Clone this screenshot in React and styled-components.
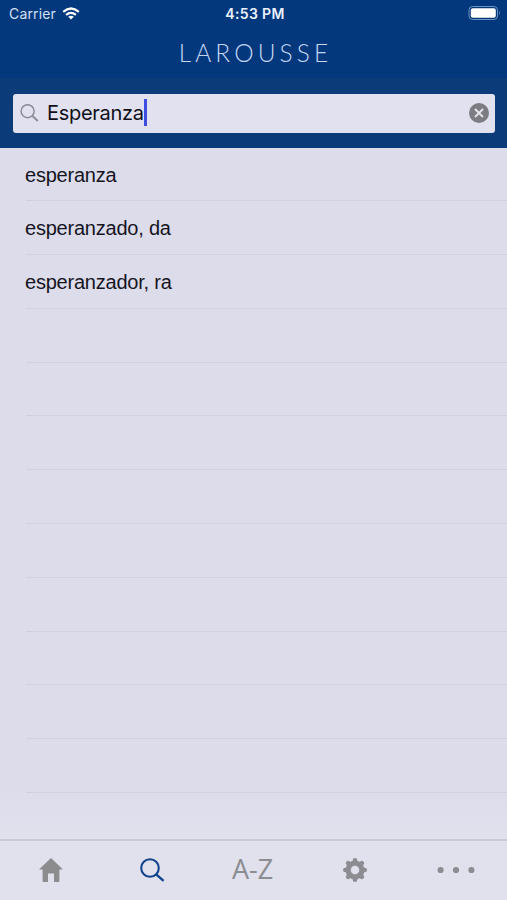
import React, { useState } from 'react'
import styled, { createGlobalStyle } from 'styled-components'

const colors = {
  navy: '#04387d',
  searchBar: '#0b3b79',
  field: '#e1e1ef',
  list: '#dddceb',
  line: '#d0d0df',
  tabBar: '#e1e1ee',
  gray: '#8c8c93',
  active: '#12438c',
}

const GlobalStyle = createGlobalStyle`
  * {
    box-sizing: border-box;
  }

  body {
    margin: 0;
    font-family: "Liberation Sans", Arial, sans-serif;
    overflow: hidden;
  }
`

const Screen = styled.div`
  display: flex;
  flex-direction: column;
  height: 900px;
  background: ${colors.list};
`

const StatusBar = styled.header`
  display: grid;
  grid-template-columns: 1fr auto 1fr;
  align-items: center;
  height: 28px;
  padding: 0 6px 2px 9px;
  background: ${colors.navy};
  color: #fff;
  font-family: Inter, sans-serif;
`

const Carrier = styled.div`
  display: flex;
  align-items: center;
  gap: 6px;
  font-size: 14px;
  letter-spacing: 0.15px;
  color: #d3e0f5;
`

const Clock = styled.div`
  font-size: 14px;
  font-weight: 600;
  letter-spacing: 0.35px;
  color: #eaf1fd;
`

const Battery = styled.svg`
  justify-self: end;
`

const Brand = styled.div`
  display: flex;
  justify-content: center;
  height: 50px;
  padding-left: 4px;
  background: ${colors.navy};
  color: #c3d6f4;
  font-family: Lato, sans-serif;
  font-size: 24.5px;
  font-weight: 300;
  line-height: 49px;
  letter-spacing: 4.1px;
`

const SearchBar = styled.div`
  height: 69.5px;
  padding: 16px 12px 0 13px;
  background: ${colors.searchBar};
`

const SearchField = styled.div`
  display: flex;
  align-items: center;
  height: 39px;
  padding: 0 6px 0 7px;
  border-radius: 3px;
  background: ${colors.field};
`

const Query = styled.span`
  margin: -2px 0 0 8px;
  font-family: Inter, sans-serif;
  font-size: 20px;
  letter-spacing: -0.3px;
  color: #10101a;
`

const Caret = styled.span`
  width: 3px;
  height: 27px;
  margin-top: -3px;
  background: #3d4ee0;
`

const ClearButton = styled.button`
  display: flex;
  margin: -1px 0 0 auto;
  padding: 0;
  border: 0;
  background: none;
`

const Results = styled.ul`
  flex: 1;
  min-height: 0;
  margin: 0;
  padding: 0 0 0 26px;
  list-style: none;
  overflow: hidden;
  background: linear-gradient(${colors.list} 0, ${colors.list} 640px, #e1e1ee 692px);
`

const Result = styled.li`
  height: 53.8px;
  border-bottom: 1px solid ${colors.line};
  font-size: 20px;
  line-height: 54.5px;
  letter-spacing: -0.22px;
  text-indent: -1px;
  color: #15151f;
`

const TabBar = styled.nav`
  display: grid;
  grid-template-columns: repeat(5, 1fr);
  height: 61px;
  border-top: 2px solid #cac9d7;
  background: ${colors.tabBar};
`

const Tab = styled.button`
  display: flex;
  align-items: center;
  justify-content: center;
  padding: 0 0 2px;
  border: 0;
  background: none;
  color: ${props => (props.$active ? colors.active : colors.gray)};
`

const TabText = styled.span`
  margin: -1px 2px 0 0;
  font-family: "Open Sans", sans-serif;
  font-size: 27px;
  line-height: 30px;
`

function WifiIcon() {
  return (
    <svg width="18" height="13" viewBox="0 0 18 13" fill="none" stroke="#fff" strokeWidth="2.2">
      <path d="M1.2 4.8Q9-1.8 16.8 4.8" />
      <path d="M4.1 7.9Q9 3.9 13.9 7.9" />
      <path d="M9 12.4L6.2 9.7Q9 7.6 11.8 9.7Z" fill="#fff" stroke="none" />
    </svg>
  )
}

function BatteryIcon() {
  return (
    <Battery width="33" height="14" viewBox="0 0 33 14">
      <rect x="1" y="0.5" width="28.5" height="13" rx="3.5" fill="none" stroke="#6e91c3" />
      <rect x="2.8" y="2.3" width="25" height="9.4" rx="2" fill="#fff" />
      <path d="M31 4.8q1.8 2.2 0 4.4z" fill="#6e91c3" />
    </Battery>
  )
}

function FieldIcon() {
  return (
    <svg width="19" height="19" viewBox="0 0 19 19" fill="none" stroke="#8d8d98" strokeWidth="1.5">
      <circle cx="7.6" cy="7.2" r="6.5" />
      <path d="M12.2 11.8L17.8 17.1" strokeWidth="2" />
    </svg>
  )
}

function ClearIcon() {
  return (
    <svg width="20" height="20" viewBox="0 0 20 20">
      <circle cx="10" cy="10" r="10" fill="#7c7c82" />
      <path d="M6 6L14 14M14 6L6 14" stroke="#e6e6f0" strokeWidth="1.8" />
    </svg>
  )
}

function HomeIcon() {
  return (
    <svg width="24" height="24" viewBox="0 0 24 24" fill="#8c8c8f">
      <path d="M12 0L24 11.6H20.4V23Q20.4 24 19.4 24H15V15.6H9V24H4.6Q3.6 24 3.6 23V11.6H0Z" />
    </svg>
  )
}

function SearchIcon() {
  return (
    <svg width="25" height="24" viewBox="0 0 25 24" fill="none" stroke="currentColor" strokeWidth="2.1">
      <circle cx="10" cy="10" r="8.8" />
      <path d="M16.2 16.4L23.6 22.8" strokeWidth="2.4" />
    </svg>
  )
}

function GearIcon() {
  return (
    <svg width="24" height="24" viewBox="0 0 24 24" fill="none" stroke="#8c8c92">
      <circle cx="12" cy="12" r="6.9" strokeWidth="5.2" />
      {[0, 45, 90, 135].map(angle => (
        <g key={angle} transform={`rotate(${angle} 12 12)`} strokeWidth="4.6" strokeLinecap="round">
          <path d="M12 4V2.3M12 20V21.7" />
        </g>
      ))}
    </svg>
  )
}

function MoreIcon() {
  return (
    <svg width="38" height="8" viewBox="0 0 38 8" fill="currentColor">
      <circle cx="3.6" cy="4" r="3.1" />
      <circle cx="19" cy="4" r="3.1" />
      <circle cx="34.4" cy="4" r="3.1" />
    </svg>
  )
}

const words = ['esperanza', 'esperanzado, da', 'esperanzador, ra']
const blankRows = 9

function App() {
  const [query, setQuery] = useState('Esperanza')

  return (
    <Screen>
      <GlobalStyle />
      <StatusBar>
        <Carrier>
          Carrier
          <WifiIcon />
        </Carrier>
        <Clock>4:53 PM</Clock>
        <BatteryIcon />
      </StatusBar>
      <Brand>LAROUSSE</Brand>
      <SearchBar>
        <SearchField>
          <FieldIcon />
          <Query>{query}</Query>
          <Caret />
          <ClearButton onClick={() => setQuery('')}>
            <ClearIcon />
          </ClearButton>
        </SearchField>
      </SearchBar>
      <Results>
        {words.map(word => (
          <Result key={word}>{word}</Result>
        ))}
        {Array.from({ length: blankRows }, (_, i) => (
          <Result key={i} />
        ))}
      </Results>
      <TabBar>
        <Tab><HomeIcon /></Tab>
        <Tab $active><SearchIcon /></Tab>
        <Tab><TabText>A-Z</TabText></Tab>
        <Tab><GearIcon /></Tab>
        <Tab><MoreIcon /></Tab>
      </TabBar>
    </Screen>
  )
}

export default App
